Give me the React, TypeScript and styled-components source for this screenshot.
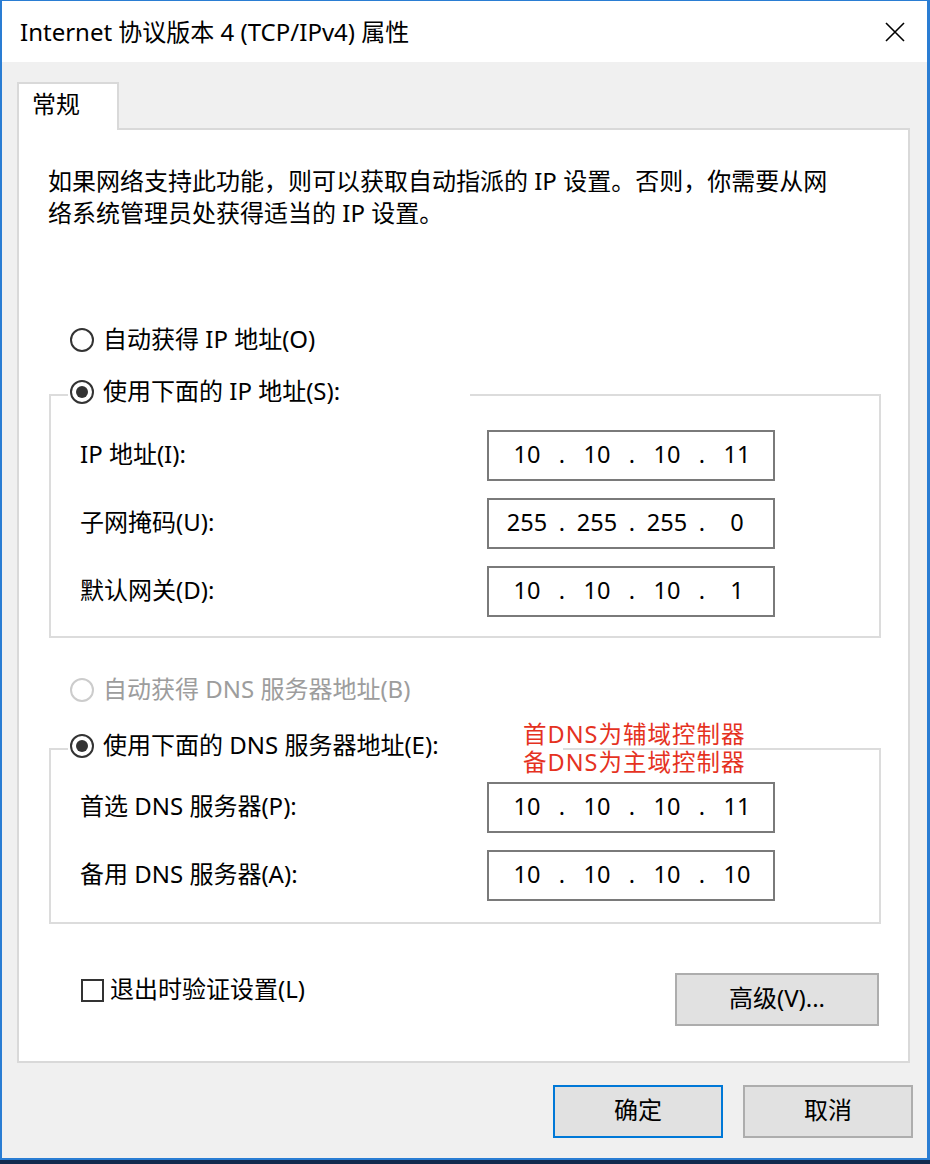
import React from "react";
import styled, { createGlobalStyle } from "styled-components";

const GlobalStyle = createGlobalStyle`
  html, body { margin: 0; padding: 0; background: #11294d; }
  body { font-family: "Noto Sans", "Noto Sans CJK SC", sans-serif; line-height: 1.4; }
  * { box-sizing: border-box; }
`;

const Window = styled.div`
  width: 930px;
  height: 1160px;
  border-style: solid;
  border-color: #2a7dd3;
  border-width: 1px 3px 2px 2px;
  display: flex;
  flex-direction: column;
  background: #f0f0f0;
  font-size: 24px;
  color: #000;
`;

const TitleBar = styled.div`
  height: 61px;
  flex: none;
  background: #fff;
  display: flex;
  align-items: center;
  justify-content: space-between;
  padding: 0 22px 0 18px;
`;

const Title = styled.span`
  font-size: 24px;
  padding-top: 1px;
`;

const CloseIcon = styled.svg`
  width: 20px;
  height: 20px;
  display: block;
`;

const Body = styled.div`
  flex: 1;
  display: flex;
  flex-direction: column;
  padding-top: 20px;
`;

const TabArea = styled.div`
  padding: 0 17px 0 15px;
  display: flex;
  flex-direction: column;
`;

const Tab = styled.div`
  width: 102px;
  height: 48px;
  margin-bottom: -2px;
  position: relative;
  z-index: 1;
  background: #fff;
  border: 2px solid #d9d9d9;
  border-bottom: none;
  display: flex;
  align-items: center;
  padding: 0 0 6px 13px;
`;

const Panel = styled.div`
  position: relative;
  height: 935px;
  background: #fff;
  border: 2px solid #d9d9d9;
  padding: 35px 27px 0 30px;
  display: flex;
  flex-direction: column;
`;

const Description = styled.p`
  margin: 0 0 0 -1px;
  line-height: 32px;
  white-space: nowrap;
`;

const RadioRow = styled.label<{ $disabled?: boolean; $mt?: number }>`
  display: flex;
  align-items: center;
  gap: 9px;
  height: 36px;
  margin-left: 21px;
  margin-top: ${(p) => p.$mt ?? 0}px;
  color: ${(p) => (p.$disabled ? "#9d9d9d" : "#000")};
  white-space: nowrap;
`;

const RadioText = styled.span`
  padding-bottom: 3px;
`;

const RadioCircle = styled.span<{ $checked?: boolean; $disabled?: boolean }>`
  width: 24px;
  height: 24px;
  flex: none;
  border-radius: 50%;
  border: 2px solid ${(p) => (p.$disabled ? "#cccccc" : "#333")};
  background: #fff;
  display: flex;
  align-items: center;
  justify-content: center;
  &::after {
    content: "";
    width: 12px;
    height: 12px;
    border-radius: 50%;
    background: #333;
    display: ${(p) => (p.$checked ? "block" : "none")};
  }
`;

const Group = styled.fieldset<{ $mt: number }>`
  margin: ${(p) => p.$mt}px 0 0 0;
  padding: 0;
  min-width: 0;
  border: 2px solid #dcdcdc;
`;

const Legend = styled.legend<{ $width: number }>`
  width: ${(p) => p.$width}px;
  margin-left: 17px;
  padding: 0 0 6px 2px;
  height: 42px;
  & > label {
    margin-left: 0;
  }
`;

const FieldGrid = styled.div<{ $pt: number; $pb: number }>`
  display: grid;
  grid-template-columns: 407px 288px;
  row-gap: 17px;
  align-items: center;
  padding: ${(p) => p.$pt}px 0 ${(p) => p.$pb}px 29px;
`;

const FieldLabel = styled.span`
  white-space: nowrap;
  padding-bottom: 3px;
`;

const IpBox = styled.div`
  width: 288px;
  height: 51px;
  border: 2px solid #7a7a7a;
  background: #fff;
  display: flex;
  align-items: center;
  padding: 0 0 3px 13px;
  font-size: 23.5px;
`;

const IpSeg = styled.span`
  width: 50px;
  text-align: center;
`;

const IpDot = styled.span`
  width: 20px;
  text-align: center;
`;

const Note = styled.div`
  position: absolute;
  left: 504px;
  top: 590px;
  color: #e5321f;
  font-size: 23.5px;
  line-height: 28px;
  letter-spacing: 1px;
  white-space: nowrap;
`;

const BottomRow = styled.div`
  margin-top: 49px;
  height: 53px;
  display: flex;
  align-items: center;
  justify-content: space-between;
  padding: 0 2px 0 32px;
`;

const CheckLabel = styled.label`
  align-self: flex-start;
  height: 34px;
  display: flex;
  align-items: center;
  gap: 6px;
  white-space: nowrap;
`;

const CheckText = styled.span`
  padding-bottom: 2px;
`;

const CheckBox = styled.span`
  width: 23px;
  height: 23px;
  flex: none;
  border: 2px solid #333;
  background: #fff;
`;

const Button = styled.button<{ $w: number; $primary?: boolean }>`
  width: ${(p) => p.$w}px;
  height: 53px;
  background: #e1e1e1;
  border: 2px solid ${(p) => (p.$primary ? "#0078d7" : "#adadad")};
  font-family: inherit;
  font-size: 24px;
  line-height: 1.4;
  color: #000;
  padding: 0 0 3px 0;
  display: flex;
  align-items: center;
  justify-content: center;
`;

const Footer = styled.div`
  display: flex;
  justify-content: flex-end;
  gap: 20px;
  padding: 22px 14px 0 0;
`;

const IpField: React.FC<{ parts: string[] }> = ({ parts }) => (
  <IpBox>
    {parts.map((p, i) => (
      <React.Fragment key={i}>
        {i > 0 && <IpDot>.</IpDot>}
        <IpSeg>{p}</IpSeg>
      </React.Fragment>
    ))}
  </IpBox>
);

const Radio: React.FC<{
  checked?: boolean;
  disabled?: boolean;
  mt?: number;
  children: React.ReactNode;
}> = ({ checked, disabled, mt, children }) => (
  <RadioRow $disabled={disabled} $mt={mt}>
    <RadioCircle $checked={checked} $disabled={disabled} />
    <RadioText>{children}</RadioText>
  </RadioRow>
);

export default function App() {
  return (
    <>
      <GlobalStyle />
      <Window>
        <TitleBar>
          <Title>Internet 协议版本 4 (TCP/IPv4) 属性</Title>
          <CloseIcon viewBox="0 0 20 20">
            <path d="M1 1 L19 19 M19 1 L1 19" stroke="#000" strokeWidth="1.6" fill="none" />
          </CloseIcon>
        </TitleBar>
        <Body>
          <TabArea>
            <Tab>常规</Tab>
            <Panel>
              <Description>
                如果网络支持此功能，则可以获取自动指派的 IP 设置。否则，你需要从网
                <br />
                络系统管理员处获得适当的 IP 设置。
              </Description>
              <Radio mt={93}>自动获得 IP 地址(O)</Radio>
              <Group $mt={16}>
                <Legend $width={402}>
                  <Radio checked>使用下面的 IP 地址(S):</Radio>
                </Legend>
                <FieldGrid $pt={14} $pb={19}>
                  <FieldLabel>IP 地址(I):</FieldLabel>
                  <IpField parts={["10", "10", "10", "11"]} />
                  <FieldLabel>子网掩码(U):</FieldLabel>
                  <IpField parts={["255", "255", "255", "0"]} />
                  <FieldLabel>默认网关(D):</FieldLabel>
                  <IpField parts={["10", "10", "10", "1"]} />
                </FieldGrid>
              </Group>
              <Radio disabled mt={34}>自动获得 DNS 服务器地址(B)</Radio>
              <Group $mt={20}>
                <Legend $width={495}>
                  <Radio checked>使用下面的 DNS 服务器地址(E):</Radio>
                </Legend>
                <FieldGrid $pt={12} $pb={21}>
                  <FieldLabel>首选 DNS 服务器(P):</FieldLabel>
                  <IpField parts={["10", "10", "10", "11"]} />
                  <FieldLabel>备用 DNS 服务器(A):</FieldLabel>
                  <IpField parts={["10", "10", "10", "10"]} />
                </FieldGrid>
              </Group>
              <BottomRow>
                <CheckLabel>
                  <CheckBox />
                  <CheckText>退出时验证设置(L)</CheckText>
                </CheckLabel>
                <Button $w={204}>高级(V)...</Button>
              </BottomRow>
              <Note>
                首DNS为辅域控制器
                <br />
                备DNS为主域控制器
              </Note>
            </Panel>
          </TabArea>
          <Footer>
            <Button $w={170} $primary>确定</Button>
            <Button $w={170}>取消</Button>
          </Footer>
        </Body>
      </Window>
    </>
  );
}
